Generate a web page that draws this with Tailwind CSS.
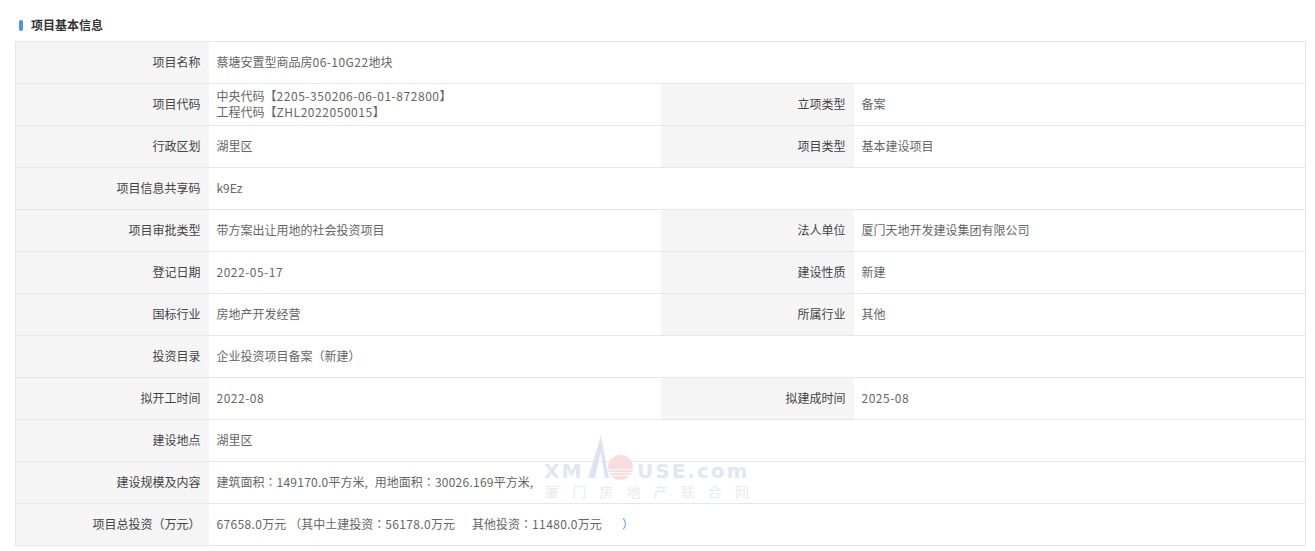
<!DOCTYPE html>
<html lang="zh">
<head>
    <meta charset="UTF-8">
    <title>项目基本信息</title>
    <script src="https://cdn.jsdelivr.net/npm/@tailwindcss/browser@4"></script>
</head>
<body class="bg-white font-['Noto_Sans_CJK_SC','Noto_Sans',sans-serif] text-xs text-[#666] overflow-hidden">
<div class="relative w-[1315px] h-[551px]">
    <!-- 标题 -->
    <div class="h-[41px] pl-[19px] pt-[20px] flex items-start gap-2">
        <span class="w-1 h-[11px] rounded-sm bg-[#4d8ff5]"></span>
        <h3 class="-mt-px font-bold text-[#333] leading-[11px]">项目基本信息</h3>
    </div>

    <table class="ml-[15px] w-[1291px] table-fixed border-collapse border border-[#e6e6e6] [&_td]:border-y [&_td]:border-[#e6e6e6] [&_tr]:h-[42px] [&_td]:leading-4 [&_td]:pb-[2px]">
        <colgroup>
            <col class="w-[193px]"><col class="w-[452px]"><col class="w-[193px]"><col>
        </colgroup>
        <tbody>
            <tr>
                <td class="bg-[#f5f5f5] text-[#444] text-right pr-2">项目名称</td>
                <td colspan="3" class="pl-2">蔡塘安置型商品房<span class="tracking-[0.45px]">06-10G22</span>地块</td>
            </tr>
            <tr>
                <td class="bg-[#f5f5f5] text-[#444] text-right pr-2">项目代码</td>
                <td class="pl-2">中央代码【<span class="tracking-[0.55px]">2205-350206-06-01-872800</span>】<br>工程代码【<span class="tracking-[0.55px]">ZHL2022050015</span>】</td>
                <td class="bg-[#f5f5f5] text-[#444] text-right pr-2">立项类型</td>
                <td class="pl-2">备案</td>
            </tr>
            <tr>
                <td class="bg-[#f5f5f5] text-[#444] text-right pr-2">行政区划</td>
                <td class="pl-2">湖里区</td>
                <td class="bg-[#f5f5f5] text-[#444] text-right pr-2">项目类型</td>
                <td class="pl-2">基本建设项目</td>
            </tr>
            <tr>
                <td class="bg-[#f5f5f5] text-[#444] text-right pr-2">项目信息共享码</td>
                <td colspan="3" class="pl-2">k9Ez</td>
            </tr>
            <tr>
                <td class="bg-[#f5f5f5] text-[#444] text-right pr-2">项目审批类型</td>
                <td class="pl-2">带方案出让用地的社会投资项目</td>
                <td class="bg-[#f5f5f5] text-[#444] text-right pr-2">法人单位</td>
                <td class="pl-2">厦门天地开发建设集团有限公司</td>
            </tr>
            <tr>
                <td class="bg-[#f5f5f5] text-[#444] text-right pr-2">登记日期</td>
                <td class="pl-2 tracking-[0.5px]">2022-05-17</td>
                <td class="bg-[#f5f5f5] text-[#444] text-right pr-2">建设性质</td>
                <td class="pl-2">新建</td>
            </tr>
            <tr>
                <td class="bg-[#f5f5f5] text-[#444] text-right pr-2">国标行业</td>
                <td class="pl-2">房地产开发经营</td>
                <td class="bg-[#f5f5f5] text-[#444] text-right pr-2">所属行业</td>
                <td class="pl-2">其他</td>
            </tr>
            <tr>
                <td class="bg-[#f5f5f5] text-[#444] text-right pr-2">投资目录</td>
                <td colspan="3" class="pl-2">企业投资项目备案<span lang="zh-TW" class="font-['Noto_Sans_CJK_TC']">（</span>新建<span lang="zh-TW" class="font-['Noto_Sans_CJK_TC']">）</span></td>
            </tr>
            <tr>
                <td class="bg-[#f5f5f5] text-[#444] text-right pr-2">拟开工时间</td>
                <td class="pl-2 tracking-[0.5px]">2022-08</td>
                <td class="bg-[#f5f5f5] text-[#444] text-right pr-2">拟建成时间</td>
                <td class="pl-2 tracking-[0.5px]">2025-08</td>
            </tr>
            <tr>
                <td class="bg-[#f5f5f5] text-[#444] text-right pr-2">建设地点</td>
                <td colspan="3" class="pl-2">湖里区</td>
            </tr>
            <tr>
                <td class="bg-[#f5f5f5] text-[#444] text-right pr-2">建设规模及内容</td>
                <td colspan="3" class="pl-2">建筑面积<span lang="zh-TW" class="font-['Noto_Sans_CJK_TC']">：</span><span class="tracking-[0.25px]">149170.0</span>平方米,<span class="ml-[7px]">用地面积</span><span lang="zh-TW" class="font-['Noto_Sans_CJK_TC']">：</span><span class="tracking-[0.25px]">30026.169</span>平方米,</td>
            </tr>
            <tr>
                <td class="bg-[#f5f5f5] text-[#444] text-right pr-2">项目总投资<span lang="zh-TW" class="font-['Noto_Sans_CJK_TC']">（</span>万元<span lang="zh-TW" class="font-['Noto_Sans_CJK_TC']">）</span></td>
                <td colspan="3" class="pl-2"><span class="tracking-[0.35px]">67658.0</span>万元<span lang="zh-TW" class="ml-[3px] font-['Noto_Sans_CJK_TC']">（</span>其中土建投资<span lang="zh-TW" class="font-['Noto_Sans_CJK_TC']">：</span><span class="tracking-[0.35px]">56178.0</span>万元<span class="ml-[17px]">其他投资</span><span lang="zh-TW" class="font-['Noto_Sans_CJK_TC']">：</span><span class="tracking-[0.35px]">11480.0</span>万元<span lang="zh-TW" class="ml-[20px] text-[#4d8ff5] font-['Noto_Sans_CJK_TC']">）</span></td>
            </tr>
        </tbody>
    </table>

    <!-- 水印 -->
    <div class="absolute left-[544px] top-[435px] w-[206px] h-[66px] pointer-events-none">
        <svg class="absolute left-[42px] top-0" width="24" height="44" viewBox="0 0 24 44">
            <path d="M2 43 L12.5 9 L14.5 0 L16.5 9 L23 43 L19 43 L14.5 17 L9 43 Z" fill="#d5e1f0" fill-opacity="0.85"/>
        </svg>
        <svg class="absolute left-[64px] top-[20px]" width="25" height="25" viewBox="0 0 25 25">
            <circle cx="12.5" cy="12.5" r="12.5" fill="#fbdcdc"/>
            <path d="M0 14.5h25M1 17.5h23M3 20.5h19" stroke="#fff" stroke-width="1"/>
        </svg>
        <span class="absolute left-0 top-[24px] text-[20px] leading-6 font-bold tracking-[2px] text-[#dfe7f3] font-['DejaVu_Sans',sans-serif]">XM</span>
        <span class="absolute left-[93px] top-[24px] text-[20px] leading-6 font-bold tracking-[2px] text-[#dfe7f3] font-['DejaVu_Sans',sans-serif]">USE.com</span>
        <div class="absolute left-[1px] top-[48px] w-[204px] flex justify-between text-[14px] leading-4 text-[#e6ecf5]">
            <span>厦</span><span>门</span><span>房</span><span>地</span><span>产</span><span>联</span><span>合</span><span>网</span>
        </div>
    </div>
</div>
</body>
</html>
